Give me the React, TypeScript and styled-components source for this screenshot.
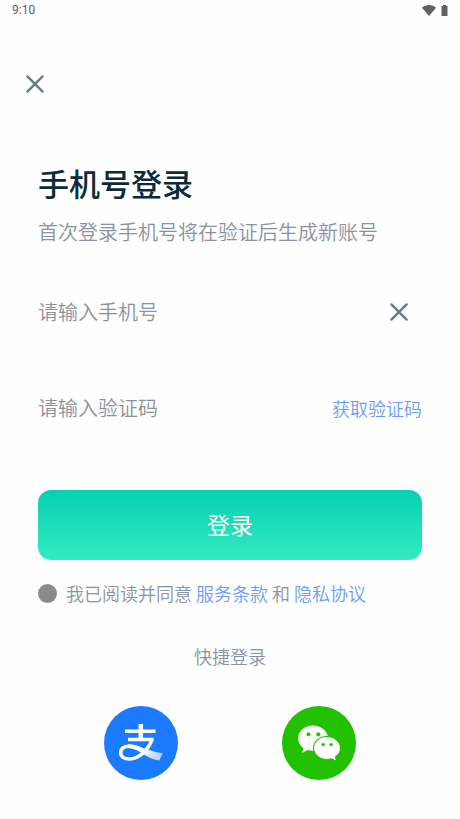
import React, { useState } from "react";
import styled, { createGlobalStyle } from "styled-components";

const GlobalStyle = createGlobalStyle`
  * { box-sizing: border-box; }
  body {
    margin: 0;
    background: #fefefe;
    color: #8b929c;
    font-family: "Noto Sans CJK SC", sans-serif;
    font-weight: 350;
  }
  button, input { font: inherit; margin: 0; padding: 0; }
  button { border: 0; background: none; cursor: pointer; }
`;

const StatusBar = styled.header`
  display: flex;
  justify-content: space-between;
  align-items: center;
  height: 20px;
  padding: 0 12px;
  color: #5c5c5c;
  font: 400 12px/20px Roboto, sans-serif;
`;

const StatusIcons = styled.div`
  display: flex;
  align-items: center;
  gap: 5px;
`;

const NavBar = styled.nav`
  display: flex;
  padding: 52px 23px 0;
`;

const IconButton = styled.button<{ $color: string }>`
  display: flex;
  align-items: center;
  justify-content: center;
  width: 24px;
  height: 24px;
  color: ${(p) => p.$color};
`;

const Content = styled.main`
  display: flex;
  flex-direction: column;
  padding: 63px 38px 38px;
`;

const Title = styled.h1`
  margin: 0;
  color: #0b2b3a;
  font-size: 31px;
  font-weight: 500;
  line-height: 48px;
`;

const Subtitle = styled.p`
  margin: 9px 0 0;
  font-size: 20px;
  line-height: 32px;
  white-space: nowrap;
`;

const Field = styled.div<{ $inset?: boolean }>`
  display: flex;
  align-items: center;
  gap: 12px;
  height: 32px;
  margin-top: 48px;
  padding-right: ${(p) => (p.$inset ? 11 : 0)}px;

  & + & { margin-top: 64px; }
`;

const TextInput = styled.input`
  flex: 1;
  min-width: 0;
  height: 32px;
  padding-bottom: 2px;
  border: 0;
  outline: 0;
  background: transparent;
  color: #0b2b3a;
  font-size: 20px;

  &::placeholder { color: #8b929c; opacity: 1; }
`;

const CodeButton = styled.button`
  color: #6c9cf4;
  font-size: 18px;
  line-height: 32px;
`;

const SubmitButton = styled.button`
  height: 70px;
  margin-top: 66px;
  padding-bottom: 2px;
  border-radius: 13px;
  background: linear-gradient(#06d0b4, #34ebc0);
  color: #fff;
  font-size: 23px;
  font-weight: 400;
`;

const Agreement = styled.div`
  display: flex;
  align-items: center;
  gap: 9px;
  margin-top: 20px;
  font-size: 18px;
  line-height: 26px;
  white-space: nowrap;
`;

const Radio = styled.input`
  appearance: none;
  flex: none;
  width: 19px;
  height: 19px;
  border-radius: 50%;
  background: #8a8a8a;

  &:checked { background: #06d0b4; }
`;

const Link = styled.a`
  color: #6c9cf4;
  text-decoration: none;
`;

const QuickTitle = styled.h2`
  margin: 37px 0 0;
  font-size: 18px;
  font-weight: 350;
  line-height: 26px;
  text-align: center;
`;

const Providers = styled.div`
  display: flex;
  justify-content: space-around;
  margin-top: 37px;
  padding: 0 14px;
`;

const ProviderButton = styled.button<{ $color: string }>`
  width: 74px;
  height: 74px;
  border-radius: 50%;
  background: ${(p) => p.$color};

  svg { display: block; }
`;

const Cross = () => (
  <svg width="20" height="20" viewBox="0 0 20 20" fill="none" stroke="currentColor" strokeWidth="2.3" strokeLinecap="round" aria-hidden="true">
    <path d="M2.400 2.400l15.200 15.200M17.600 2.400L2.400 17.600" />
  </svg>
);

const Alipay = () => (
  <svg width="74" height="74" viewBox="0 0 74 74" fill="none" aria-hidden="true">
    <defs>
      <linearGradient id="tail" gradientUnits="userSpaceOnUse" x1="36" y1="44" x2="58" y2="52">
        <stop offset="0" stopColor="#fff" />
        <stop offset="1" stopColor="#a9cbff" />
      </linearGradient>
    </defs>
    <path d="M24 38.300C35 38.300 42 45 58.700 47.200L55.300 54.500C42 53 35 42 24 42z" fill="url(#tail)" />
    <path d="M48 33.500C44.500 43.500 35 53 25.500 53c-5.500 0-8.800-2.600-8.800-6.300 0-4 3.300-6.500 8.300-6.500 3.500 0 6.500 1 9.500 2.300" stroke="#fff" strokeWidth="3.600" />
    <path d="M21 25.300h30.500M24 33.500h25.600" stroke="#fff" strokeWidth="3.500" />
    <path d="M36.800 18v16" stroke="#fff" strokeWidth="4.500" />
  </svg>
);

const WeChat = () => (
  <svg width="74" height="74" viewBox="0 0 74 74" fill="#fff" aria-hidden="true">
    <path d="M31 19.500c-8.300 0-15 5.700-15 12.800 0 4 2.200 7.500 5.600 9.900l-1.600 4.800 5.800-2.900c1.700.5 3.400.8 5.200.8 8.300 0 15-5.500 15-12.600s-6.700-12.800-15-12.800z" />
    <path d="M45 30.500c-7.400 0-13.500 5-13.500 11.500S37.600 53.500 45 53.500c1.600 0 3.200-.2 4.600-.7l5.200 2.600-1.400-4.400c3.200-2.100 5.100-5.300 5.100-9 0-6.500-6.100-11.500-13.500-11.500z" stroke="#21c100" strokeWidth="1.100" />
    <g fill="#21c100">
      <circle cx="26.500" cy="28.200" r="2" />
      <circle cx="36.300" cy="28.200" r="2" />
      <circle cx="41.200" cy="38.600" r="1.700" />
      <circle cx="49" cy="38.600" r="1.700" />
    </g>
  </svg>
);

export default function App() {
  const [phone, setPhone] = useState("");
  const [code, setCode] = useState("");

  return (
    <>
      <GlobalStyle />
      <StatusBar>
        <span>9:10</span>
        <StatusIcons>
          <svg width="14" height="11" viewBox="0 0 14 11" fill="#606060" aria-hidden="true">
            <path d="M0 2.800C4-.9 10-.9 14 2.800L7 11z" />
          </svg>
          <svg width="7" height="11" viewBox="0 0 7 11" fill="#606060" aria-hidden="true">
            <path d="M2 0h3v1h1.500v10h-6V1H2z" />
          </svg>
        </StatusIcons>
      </StatusBar>
      <NavBar>
        <IconButton type="button" $color="#647a85" aria-label="关闭"><Cross /></IconButton>
      </NavBar>
      <Content>
        <Title>手机号登录</Title>
        <Subtitle>首次登录手机号将在验证后生成新账号</Subtitle>
        <Field $inset>
          <TextInput type="tel" aria-label="手机号" placeholder="请输入手机号" value={phone} onChange={(e) => setPhone(e.target.value)} />
          <IconButton type="button" $color="#647a80" aria-label="清除" onClick={() => setPhone("")}><Cross /></IconButton>
        </Field>
        <Field>
          <TextInput inputMode="numeric" aria-label="验证码" placeholder="请输入验证码" value={code} onChange={(e) => setCode(e.target.value)} />
          <CodeButton type="button">获取验证码</CodeButton>
        </Field>
        <SubmitButton type="button">登录</SubmitButton>
        <Agreement>
          <Radio type="radio" id="agree" />
          <span>
            <label htmlFor="agree">我已阅读并同意</label> <Link href="#terms">服务条款</Link> 和 <Link href="#privacy">隐私协议</Link>
          </span>
        </Agreement>
        <QuickTitle>快捷登录</QuickTitle>
        <Providers>
          <ProviderButton type="button" $color="#1c7aff" aria-label="支付宝登录"><Alipay /></ProviderButton>
          <ProviderButton type="button" $color="#21c100" aria-label="微信登录"><WeChat /></ProviderButton>
        </Providers>
      </Content>
    </>
  );
}
